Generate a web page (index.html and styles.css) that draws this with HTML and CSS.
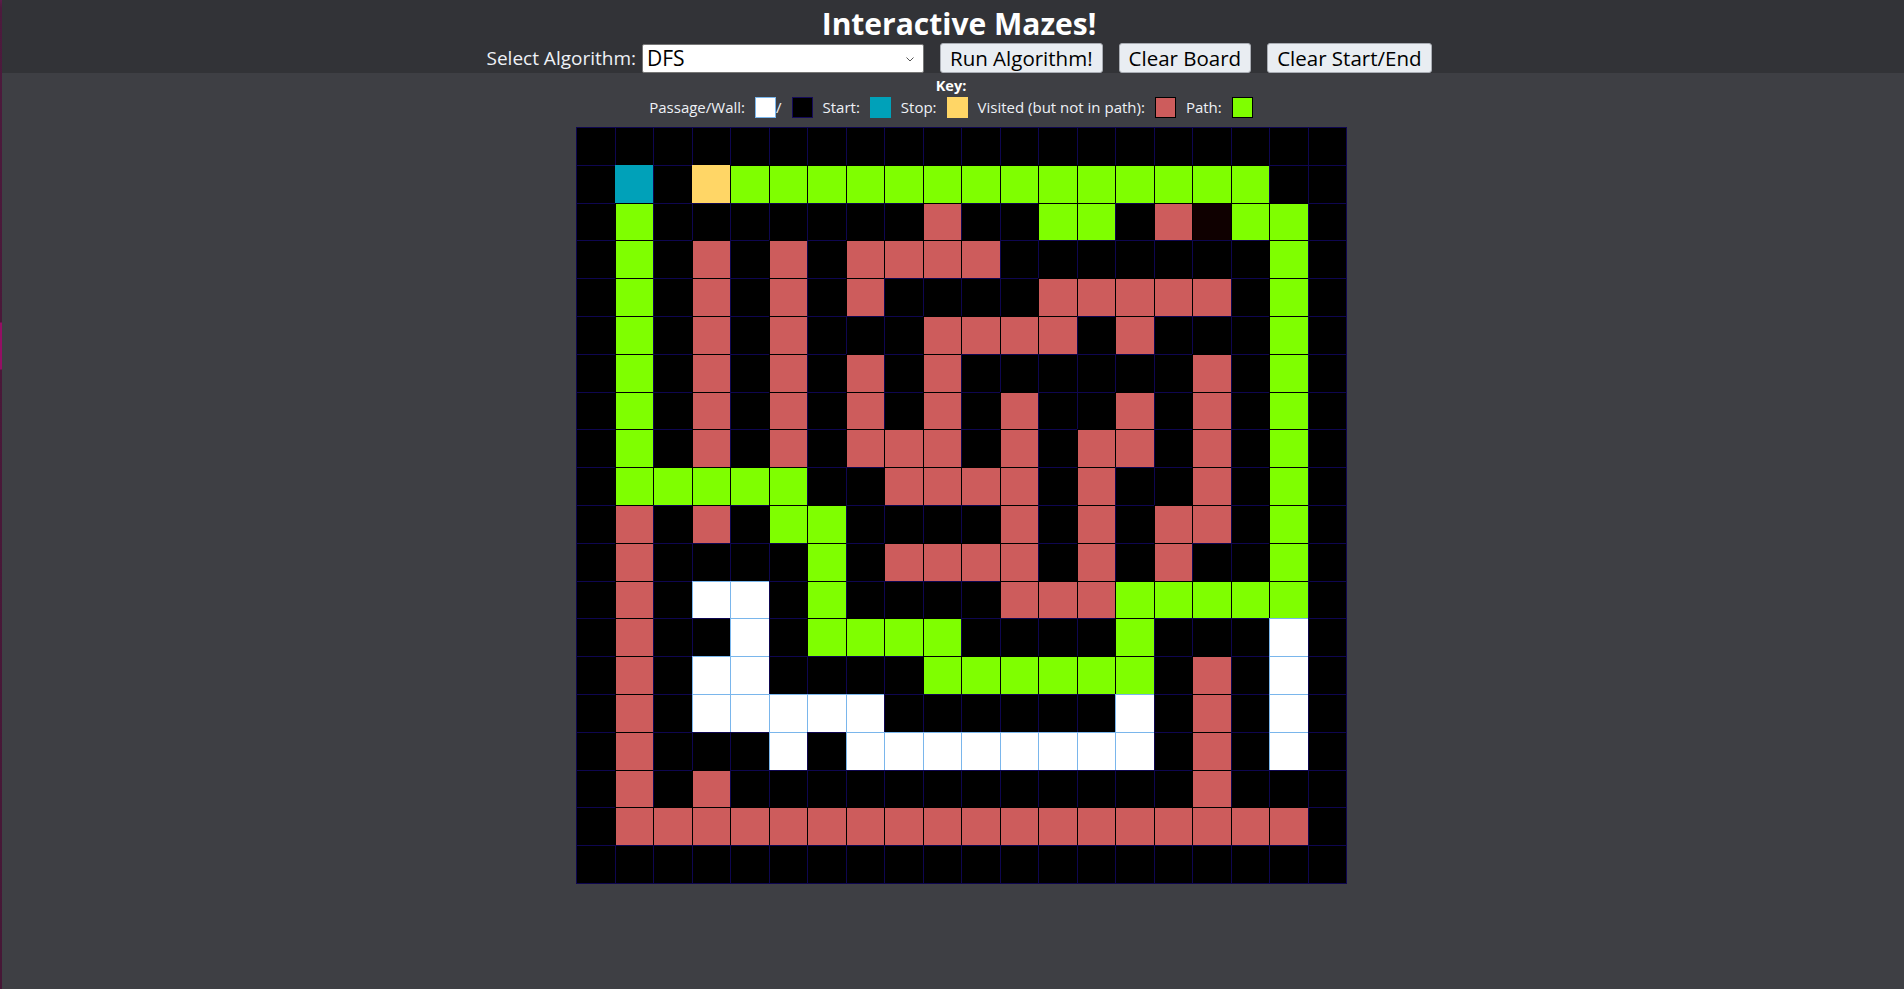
FILE: index.html
```html
<!DOCTYPE html>
<html lang="en">
<head>
<meta charset="utf-8">
<title>Interactive Mazes!</title>
<link rel="stylesheet" href="styles.css">
</head>
<body>
<div class="edge"></div>
<div class="app">
  <header class="header">
    <h1 class="title">Interactive Mazes!</h1>
    <div class="controls">
      <div class="algo">
        <label class="algo-label" for="algo">Select Algorithm:</label>
        <div class="select-wrap">
          <select id="algo" class="select"><option>DFS</option><option>BFS</option><option>A*</option></select>
          <svg class="chevron" width="8" height="5" viewBox="0 0 8 5"><polyline points="0.5,0.5 4,4 7.5,0.5" fill="none" stroke="#555" stroke-width="1"/></svg>
        </div>
      </div>
      <button class="btn">Run Algorithm!</button>
      <button class="btn">Clear Board</button>
      <button class="btn">Clear Start/End</button>
    </div>
  </header>
  <div class="key">
    <div class="key-title">Key:</div>
    <div class="key-row">
      <span>Passage/Wall:</span>
      <span class="pair"><span class="sw sw-pass"></span>/</span>
      <span class="sw sw-wall"></span>
      <span>Start:</span>
      <span class="sw sw-start"></span>
      <span>Stop:</span>
      <span class="sw sw-stop"></span>
      <span>Visited (but not in path):</span>
      <span class="sw sw-visit"></span>
      <span>Path:</span>
      <span class="sw sw-path"></span>
    </div>
  </div>
  <div class="board">
    <div class="w"></div><div class="w"></div><div class="w"></div><div class="w"></div><div class="w"></div><div class="w"></div><div class="w"></div><div class="w"></div><div class="w"></div><div class="w"></div><div class="w"></div><div class="w"></div><div class="w"></div><div class="w"></div><div class="w"></div><div class="w"></div><div class="w"></div><div class="w"></div><div class="w"></div><div class="w"></div>
    <div class="w"></div><div class="s"></div><div class="w"></div><div class="e"></div><div class="g"></div><div class="g"></div><div class="g"></div><div class="g"></div><div class="g"></div><div class="g"></div><div class="g"></div><div class="g"></div><div class="g"></div><div class="g"></div><div class="g"></div><div class="g"></div><div class="g"></div><div class="g"></div><div class="w"></div><div class="w"></div>
    <div class="w"></div><div class="g"></div><div class="w"></div><div class="w"></div><div class="w"></div><div class="w"></div><div class="w"></div><div class="w"></div><div class="w"></div><div class="r"></div><div class="w"></div><div class="w"></div><div class="g"></div><div class="g"></div><div class="w"></div><div class="r"></div><div class="d"></div><div class="g"></div><div class="g"></div><div class="w"></div>
    <div class="w"></div><div class="g"></div><div class="w"></div><div class="r"></div><div class="w"></div><div class="r"></div><div class="w"></div><div class="r"></div><div class="r"></div><div class="r"></div><div class="r"></div><div class="w"></div><div class="w"></div><div class="w"></div><div class="w"></div><div class="w"></div><div class="w"></div><div class="w"></div><div class="g"></div><div class="w"></div>
    <div class="w"></div><div class="g"></div><div class="w"></div><div class="r"></div><div class="w"></div><div class="r"></div><div class="w"></div><div class="r"></div><div class="w"></div><div class="w"></div><div class="w"></div><div class="w"></div><div class="r"></div><div class="r"></div><div class="r"></div><div class="r"></div><div class="r"></div><div class="w"></div><div class="g"></div><div class="w"></div>
    <div class="w"></div><div class="g"></div><div class="w"></div><div class="r"></div><div class="w"></div><div class="r"></div><div class="w"></div><div class="w"></div><div class="w"></div><div class="r"></div><div class="r"></div><div class="r"></div><div class="r"></div><div class="w"></div><div class="r"></div><div class="w"></div><div class="w"></div><div class="w"></div><div class="g"></div><div class="w"></div>
    <div class="w"></div><div class="g"></div><div class="w"></div><div class="r"></div><div class="w"></div><div class="r"></div><div class="w"></div><div class="r"></div><div class="w"></div><div class="r"></div><div class="w"></div><div class="w"></div><div class="w"></div><div class="w"></div><div class="w"></div><div class="w"></div><div class="r"></div><div class="w"></div><div class="g"></div><div class="w"></div>
    <div class="w"></div><div class="g"></div><div class="w"></div><div class="r"></div><div class="w"></div><div class="r"></div><div class="w"></div><div class="r"></div><div class="w"></div><div class="r"></div><div class="w"></div><div class="r"></div><div class="w"></div><div class="w"></div><div class="r"></div><div class="w"></div><div class="r"></div><div class="w"></div><div class="g"></div><div class="w"></div>
    <div class="w"></div><div class="g"></div><div class="w"></div><div class="r"></div><div class="w"></div><div class="r"></div><div class="w"></div><div class="r"></div><div class="r"></div><div class="r"></div><div class="w"></div><div class="r"></div><div class="w"></div><div class="r"></div><div class="r"></div><div class="w"></div><div class="r"></div><div class="w"></div><div class="g"></div><div class="w"></div>
    <div class="w"></div><div class="g"></div><div class="g"></div><div class="g"></div><div class="g"></div><div class="g"></div><div class="w"></div><div class="w"></div><div class="r"></div><div class="r"></div><div class="r"></div><div class="r"></div><div class="w"></div><div class="r"></div><div class="w"></div><div class="w"></div><div class="r"></div><div class="w"></div><div class="g"></div><div class="w"></div>
    <div class="w"></div><div class="r"></div><div class="w"></div><div class="r"></div><div class="w"></div><div class="g"></div><div class="g"></div><div class="w"></div><div class="w"></div><div class="w"></div><div class="w"></div><div class="r"></div><div class="w"></div><div class="r"></div><div class="w"></div><div class="r"></div><div class="r"></div><div class="w"></div><div class="g"></div><div class="w"></div>
    <div class="w"></div><div class="r"></div><div class="w"></div><div class="w"></div><div class="w"></div><div class="w"></div><div class="g"></div><div class="w"></div><div class="r"></div><div class="r"></div><div class="r"></div><div class="r"></div><div class="w"></div><div class="r"></div><div class="w"></div><div class="r"></div><div class="w"></div><div class="w"></div><div class="g"></div><div class="w"></div>
    <div class="w"></div><div class="r"></div><div class="w"></div><div class="p"></div><div class="p"></div><div class="w"></div><div class="g"></div><div class="w"></div><div class="w"></div><div class="w"></div><div class="w"></div><div class="r"></div><div class="r"></div><div class="r"></div><div class="g"></div><div class="g"></div><div class="g"></div><div class="g"></div><div class="g"></div><div class="w"></div>
    <div class="w"></div><div class="r"></div><div class="w"></div><div class="w"></div><div class="p"></div><div class="w"></div><div class="g"></div><div class="g"></div><div class="g"></div><div class="g"></div><div class="w"></div><div class="w"></div><div class="w"></div><div class="w"></div><div class="g"></div><div class="w"></div><div class="w"></div><div class="w"></div><div class="p"></div><div class="w"></div>
    <div class="w"></div><div class="r"></div><div class="w"></div><div class="p"></div><div class="p"></div><div class="w"></div><div class="w"></div><div class="w"></div><div class="w"></div><div class="g"></div><div class="g"></div><div class="g"></div><div class="g"></div><div class="g"></div><div class="g"></div><div class="w"></div><div class="r"></div><div class="w"></div><div class="p"></div><div class="w"></div>
    <div class="w"></div><div class="r"></div><div class="w"></div><div class="p"></div><div class="p"></div><div class="p"></div><div class="p"></div><div class="p"></div><div class="w"></div><div class="w"></div><div class="w"></div><div class="w"></div><div class="w"></div><div class="w"></div><div class="p"></div><div class="w"></div><div class="r"></div><div class="w"></div><div class="p"></div><div class="w"></div>
    <div class="w"></div><div class="r"></div><div class="w"></div><div class="w"></div><div class="w"></div><div class="p"></div><div class="w"></div><div class="p"></div><div class="p"></div><div class="p"></div><div class="p"></div><div class="p"></div><div class="p"></div><div class="p"></div><div class="p"></div><div class="w"></div><div class="r"></div><div class="w"></div><div class="p"></div><div class="w"></div>
    <div class="w"></div><div class="r"></div><div class="w"></div><div class="r"></div><div class="w"></div><div class="w"></div><div class="w"></div><div class="w"></div><div class="w"></div><div class="w"></div><div class="w"></div><div class="w"></div><div class="w"></div><div class="w"></div><div class="w"></div><div class="w"></div><div class="r"></div><div class="w"></div><div class="w"></div><div class="w"></div>
    <div class="w"></div><div class="r"></div><div class="r"></div><div class="r"></div><div class="r"></div><div class="r"></div><div class="r"></div><div class="r"></div><div class="r"></div><div class="r"></div><div class="r"></div><div class="r"></div><div class="r"></div><div class="r"></div><div class="r"></div><div class="r"></div><div class="r"></div><div class="r"></div><div class="r"></div><div class="w"></div>
    <div class="w"></div><div class="w"></div><div class="w"></div><div class="w"></div><div class="w"></div><div class="w"></div><div class="w"></div><div class="w"></div><div class="w"></div><div class="w"></div><div class="w"></div><div class="w"></div><div class="w"></div><div class="w"></div><div class="w"></div><div class="w"></div><div class="w"></div><div class="w"></div><div class="w"></div><div class="w"></div>
  </div>
</div>
</body>
</html>
```
FILE: styles.css
```css
* { box-sizing: border-box; }
html, body { margin: 0; height: 100%; }
body {
  display: flex;
  background: #3e3f44;
  font-family: "Open Sans", "Noto Sans", sans-serif;
  color: #eef1f6;
}
.edge {
  flex: none;
  width: 2px;
  background: linear-gradient(to bottom, #5c1c49 0, #4d1a3d 8px, #4a1839 322px, #940f64 323px, #940f64 369px, #4a1839 370px, #461736 100%);
}
.app {
  flex: 1;
  display: flex;
  flex-direction: column;
  align-items: center;
}
.header {
  align-self: stretch;
  height: 73px;
  background: #323337;
  display: flex;
  flex-direction: column;
  align-items: center;
  padding-left: 12px;
}
.title {
  margin: 9px 0 0;
  font-size: 30px;
  line-height: 30px;
  font-weight: 700;
  color: #ffffff;
}
.controls {
  margin-top: 4px;
  display: flex;
  align-items: flex-end;
  gap: 16px;
}
.algo {
  display: flex;
  align-items: flex-end;
  gap: 6px;
}
.algo-label {
  font-size: 19px;
  line-height: 30px;
  color: #eef1f6;
}
.select-wrap {
  position: relative;
  width: 282px;
  height: 29px;
}
.select {
  appearance: none;
  -webkit-appearance: none;
  display: block;
  width: 100%;
  height: 100%;
  margin: 0;
  padding: 0 0 0 4px;
  border: 1px solid #767676;
  border-radius: 2px;
  background: #ffffff;
  color: #000000;
  font-family: "Open Sans", sans-serif;
  font-size: 21px;
  line-height: 27px;
}
.chevron {
  position: absolute;
  right: 10px;
  top: 13px;
}
.btn {
  height: 30px;
  margin: 0;
  padding: 0 9px;
  border: 1px solid #a9adb4;
  border-radius: 3px;
  background: #e9edf2;
  color: #000000;
  font-family: "Open Sans", sans-serif;
  font-size: 20.5px;
  line-height: 28px;
}
.key {
  margin-top: 4px;
  display: flex;
  flex-direction: column;
  align-items: center;
  margin-right: 4px;
}
.key-title {
  font-size: 14.5px;
  line-height: 17px;
  font-weight: 700;
  color: #ffffff;
}
.key-row {
  margin-top: 3px;
  display: flex;
  align-items: center;
  gap: 10px;
  font-size: 15px;
  line-height: 21px;
  color: #eef1f6;
}
.pair {
  display: flex;
  align-items: center;
}
.sw {
  display: block;
  width: 21px;
  height: 21px;
}
.sw-pass { background: #ffffff; border: 1px solid #7ab6ec; }
.sw-wall { background: #000000; border: 1px solid #140a5a; }
.sw-start { background: #00a1b9; }
.sw-stop { background: #ffd666; }
.sw-visit { background: #cd5c5c; border: 1px solid #000000; }
.sw-path { background: #7fff00; border: 1px solid #000000; }
.board {
  margin: 9px 0 0 17px;
  display: grid;
  grid-template-columns: repeat(20, 38.5px);
  grid-template-rows: repeat(20, 37.8px);
  padding: 0 1px 1px 0;
  background: #0e0650;
}
.board > div {
  margin: 0 -1px -1px 0;
  border: 1px solid #0e0650;
  background: #000000;
}
.board > .w { background: #000000; border-color: #0e0650; }
.board > .p { background: #ffffff; border-color: #7ab6ec; }
.board > .g { background: #7fff00; border-color: #000000; }
.board > .r { background: #cd5c5c; border-color: #000000; }
.board > .s { background: #00a1b9; border-color: #00a1b9; }
.board > .e { background: #ffd666; border-color: #ffd666; }
.board > .d { background: #0f0000; border-color: #000000; }
```
